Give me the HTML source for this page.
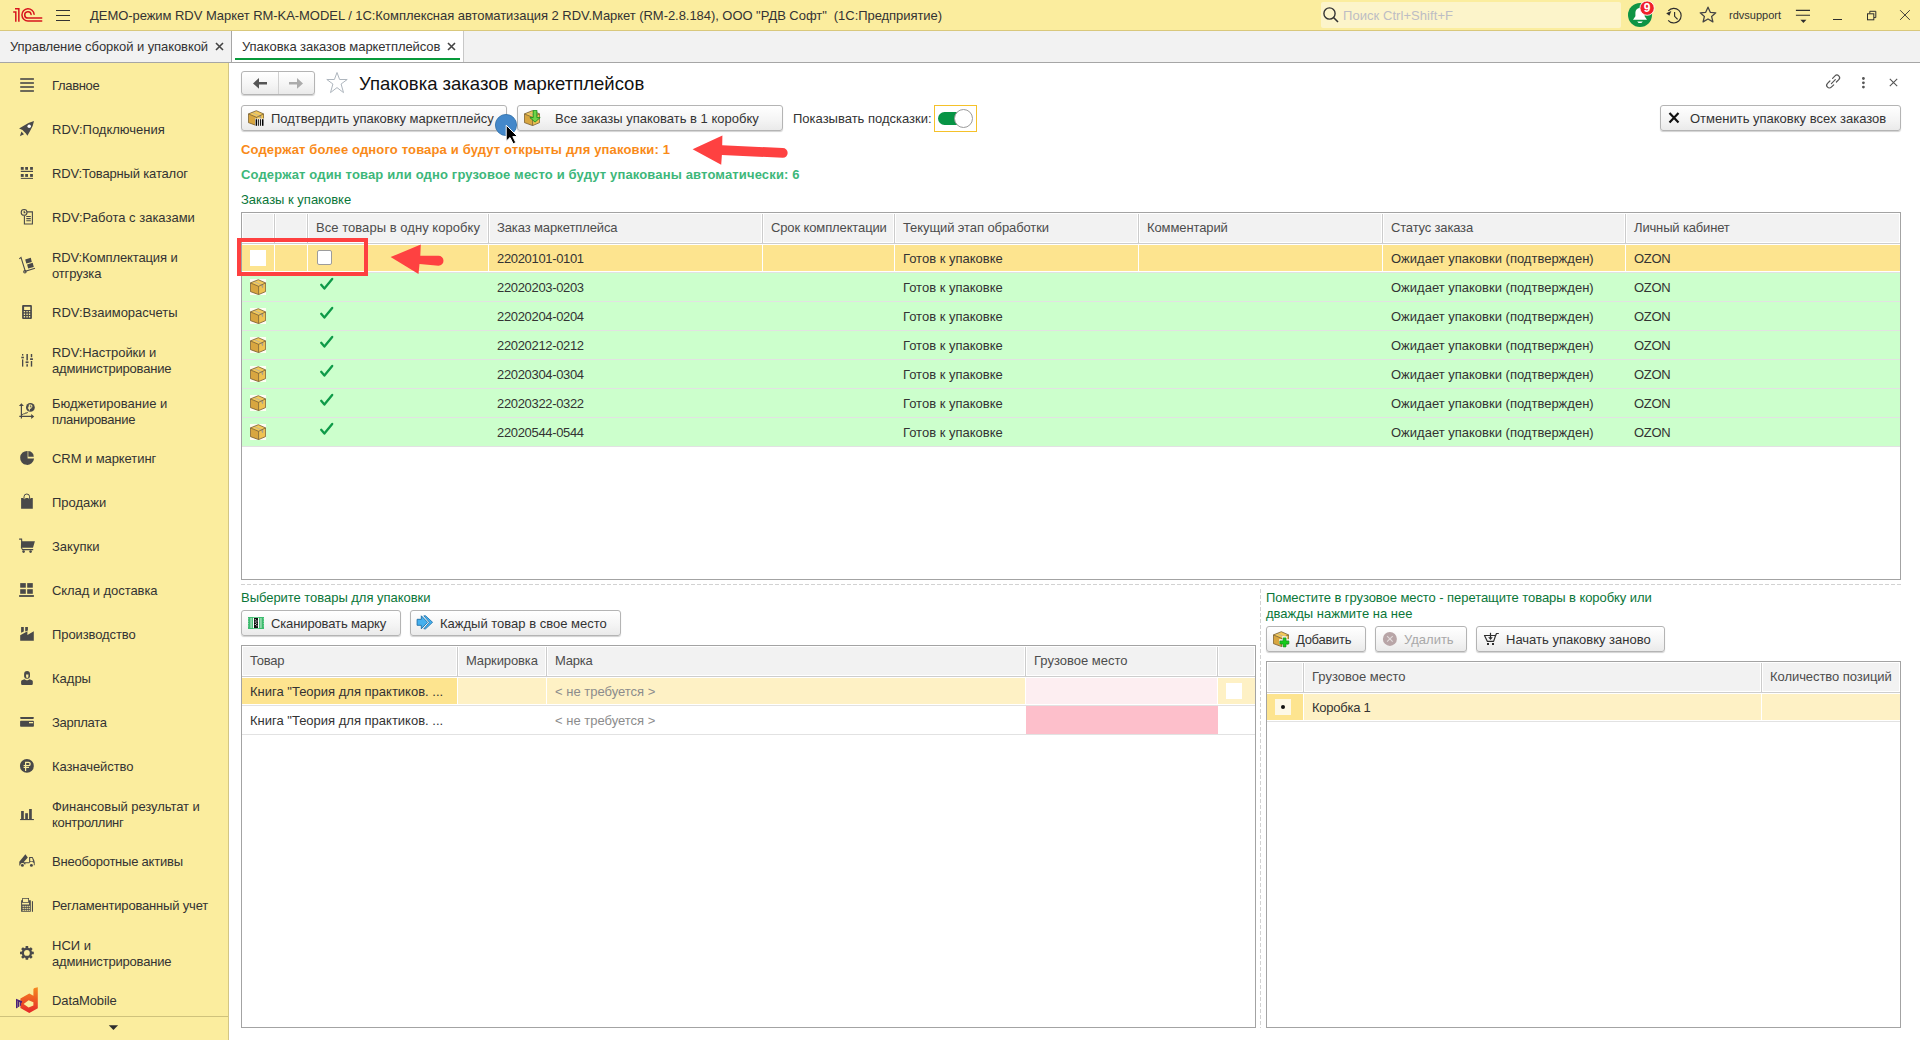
<!DOCTYPE html>
<html><head><meta charset="utf-8">
<style>
*{box-sizing:border-box}
html,body{margin:0;padding:0;width:1920px;height:1040px;overflow:hidden;background:#fff;font-family:"Liberation Sans",sans-serif;font-size:13px;color:#333}
.a{position:absolute}
.t{position:absolute;white-space:nowrap;line-height:16px}
#top{left:0;top:0;width:1920px;height:31px;background:#FBED9E;border-bottom:1px solid #D9C87C}
#tabs{left:0;top:31px;width:1920px;height:32px;background:#F2F2F2;border-bottom:1px solid #A6A6A6}
#side{left:0;top:63px;width:229px;height:977px;background:#FBED9E;border-right:1px solid #D3C684}
.si{position:absolute;left:52px;white-space:nowrap;line-height:16px;color:#333}
.ic{position:absolute;left:20px}
.btn{position:absolute;height:26px;border:1px solid #B4B4B4;border-radius:3px;background:linear-gradient(#FFFFFF,#F4F4F4 60%,#EAEAEA);box-shadow:0 1px 1px rgba(0,0,0,0.18)}
.tbl{position:absolute;border:1px solid #A5A5A5;background:#fff;overflow:hidden}
.hd{position:absolute;background:#F2F2F2}
.vl{position:absolute;width:1px}
.hl{position:absolute;height:1px}
.cell{position:absolute;white-space:nowrap;line-height:16px;color:#333}
.hdr{position:absolute;white-space:nowrap;line-height:16px;color:#4D4D4D}
</style></head><body>
<!-- TOP BAR -->
<div id="top" class="a"></div>
<div id="tabs" class="a"></div>
<div id="side" class="a"></div>

<!-- top bar content -->
<svg class="a" style="left:0;top:0" width="50" height="30" viewBox="0 0 50 30">
<g fill="none" stroke="#D7141E" stroke-width="1.5" stroke-linecap="butt">
<path d="M13.2 11.9H15.8V21.8"/><path d="M15 8.75H18.85V21.8"/>
<path d="M34.1 14.3A6.1 6.1 0 1 0 28 20.95H41.7" stroke-linecap="round"/>
<path d="M31.1 14.5A3.2 3.2 0 1 0 28 18.1H41.7" stroke-linecap="round"/>
</g></svg>
<div class="a" style="left:56px;top:10px;width:14px;height:1px;background:#333"></div>
<div class="a" style="left:56px;top:15px;width:14px;height:1px;background:#333"></div>
<div class="a" style="left:56px;top:20px;width:14px;height:1px;background:#333"></div>
<div class="t" style="left:90px;top:8px;color:#333;letter-spacing:-0.05px">ДЕМО-режим RDV Маркет RM-KA-MODEL / 1С:Комплексная автоматизация 2 RDV.Маркет (RM-2.8.184), ООО "РДВ Софт"&nbsp; (1С:Предприятие)</div>
<div class="a" style="left:1321px;top:2px;width:300px;height:26px;background:#FCF4CA;border-radius:2px"></div>
<svg class="a" style="left:1322px;top:6px" width="18" height="18" viewBox="0 0 18 18"><circle cx="7.5" cy="7.5" r="5.6" fill="none" stroke="#333" stroke-width="1.4"/><path d="M11.5 11.5L16 16" stroke="#333" stroke-width="1.6"/></svg>
<div class="t" style="left:1343px;top:8px;color:#BDBDC4;letter-spacing:0.059px">Поиск Ctrl+Shift+F</div>
<svg class="a" style="left:1620px;top:0" width="40" height="30" viewBox="1620 0 40 30">
<circle cx="1640" cy="14.9" r="12" fill="#0E9445"/>
<path d="M1633 19.8H1647L1644.6 16.2V12.5A4.6 4.6 0 0 0 1635.4 12.5V16.2z" fill="#fff"/>
<path d="M1637.2 21.4H1642.8L1641.4 23H1638.6z" fill="#fff"/>
<circle cx="1647.1" cy="8.1" r="7.2" fill="#F0202A" stroke="#fff" stroke-width="0.9"/>
<text x="1647.1" y="12.2" font-family="Liberation Sans" font-weight="bold" font-size="12" fill="#fff" text-anchor="middle">9</text>
</svg>
<svg class="a" style="left:1662px;top:5px" width="24" height="22" viewBox="1662 4.3 24 22"><g fill="none" stroke="#2E2E2E" stroke-width="1.15"><path d="M1668.3 10.2A7.3 7.3 0 1 1 1668.2 19.6"/><path d="M1674.6 11.4V15.6L1677.6 18.6"/></g><path d="M1666.2 12.6L1671.3 10.4 1669.4 15z" fill="#2E2E2E"/></svg>
<svg class="a" style="left:1698px;top:5px" width="20" height="20" viewBox="0 0 20 20"><path d="M10 2.2L12.3 7.3 17.8 7.8 13.6 11.4 14.9 16.9 10 14 5.1 16.9 6.4 11.4 2.2 7.8 7.7 7.3z" fill="none" stroke="#444" stroke-width="1.3" stroke-linejoin="round"/></svg>
<div class="t" style="left:1729px;top:7px;color:#333;font-size:11px">rdvsupport</div>
<svg class="a" style="left:1790px;top:5px" width="24" height="22" viewBox="1790 5 24 22"><path d="M1795.9 10.4H1810M1795.9 15.3H1810" stroke="#2E2E2E" stroke-width="1.1"/><path d="M1800.4 19.8H1806.4L1803.4 23z" fill="#2E2E2E"/></svg>
<div class="a" style="left:1833px;top:19px;width:9px;height:1px;background:#2E2E2E"></div>
<svg class="a" style="left:1864px;top:8px" width="16" height="16" viewBox="1864 8 16 16"><path d="M1869.8 13.5V11.3H1875.8V17.6H1874" fill="none" stroke="#2E2E2E" stroke-width="1"/><rect x="1867.5" y="13.8" width="6.3" height="6" fill="none" stroke="#2E2E2E" stroke-width="1"/></svg>
<svg class="a" style="left:1898px;top:8px" width="14" height="14" viewBox="1898 8 14 14"><path d="M1900.1 10.2L1909.8 19.9M1909.8 10.2L1900.1 19.9" stroke="#2E2E2E" stroke-width="0.9"/></svg>
<!-- tabs -->
<div class="t" style="left:10px;top:39px;color:#333;letter-spacing:-0.07px">Управление сборкой и упаковкой</div>
<svg class="a" style="left:215px;top:42px" width="9" height="9" viewBox="0 0 9 9"><path d="M1 1L8 8M8 1L1 8" stroke="#444" stroke-width="1.6"/></svg>
<div class="a" style="left:231px;top:31px;width:233px;height:31px;background:#fff;border-left:1px solid #A6A6A6;border-right:1px solid #C8C8C8"></div>
<div class="t" style="left:242px;top:39px;color:#333;letter-spacing:-0.07px">Упаковка заказов маркетплейсов</div>
<svg class="a" style="left:447px;top:42px" width="9" height="9" viewBox="0 0 9 9"><path d="M1 1L8 8M8 1L1 8" stroke="#444" stroke-width="1.6"/></svg>
<div class="a" style="left:235px;top:58px;width:225px;height:2px;background:#079A3B"></div>
<!-- sidebar -->
<div class="si" style="top:78px;letter-spacing:-0.333px">Главное</div>
<div class="si" style="top:122px">RDV:Подключения</div>
<div class="si" style="top:166px;letter-spacing:-0.158px">RDV:Товарный каталог</div>
<div class="si" style="top:210px">RDV:Работа с заказами</div>
<div class="si" style="top:250px;letter-spacing:-0.118px">RDV:Комплектация и</div>
<div class="si" style="top:266px;letter-spacing:-0.143px">отгрузка</div>
<div class="si" style="top:305px">RDV:Взаиморасчеты</div>
<div class="si" style="top:345px;letter-spacing:-0.071px">RDV:Настройки и</div>
<div class="si" style="top:361px;letter-spacing:-0.188px">администрирование</div>
<div class="si" style="top:396px">Бюджетирование и</div>
<div class="si" style="top:412px;letter-spacing:-0.273px">планирование</div>
<div class="si" style="top:451px;letter-spacing:-0.071px">CRM и маркетинг</div>
<div class="si" style="top:495px">Продажи</div>
<div class="si" style="top:539px">Закупки</div>
<div class="si" style="top:583px;letter-spacing:-0.067px">Склад и доставка</div>
<div class="si" style="top:627px;letter-spacing:-0.091px">Производство</div>
<div class="si" style="top:671px">Кадры</div>
<div class="si" style="top:715px;letter-spacing:-0.286px">Зарплата</div>
<div class="si" style="top:759px;letter-spacing:-0.091px">Казначейство</div>
<div class="si" style="top:799px;letter-spacing:-0.048px">Финансовый результат и</div>
<div class="si" style="top:815px;letter-spacing:-0.300px">контроллинг</div>
<div class="si" style="top:854px;letter-spacing:-0.222px">Внеоборотные активы</div>
<div class="si" style="top:898px;letter-spacing:-0.182px">Регламентированный учет</div>
<div class="si" style="top:938px">НСИ и</div>
<div class="si" style="top:954px;letter-spacing:-0.188px">администрирование</div>
<div class="si" style="top:993px;letter-spacing:-0.111px">DataMobile</div>
<svg class="a" style="left:0;top:0" width="228" height="1040" viewBox="0 0 228 1040">
<g fill="#494949" stroke="none">
<!-- glavnoe -->
<rect x="20.2" y="78.2" width="13.7" height="1.6"/><rect x="20.2" y="82.2" width="13.7" height="1.6"/><rect x="20.2" y="86.2" width="13.7" height="1.6"/><rect x="20.2" y="90.2" width="13.7" height="1.6"/>
<!-- rocket -->
<path d="M34 121.1Q33.2 126.6 29.8 131.6L27.4 135.7 25.9 133.5 22.5 130.1 19.1 128.5 23.3 126Q28.3 122.6 34 121.1Z"/>
<path d="M21.4 131.6L24 134.3 19.9 136.3z"/>
<circle cx="29.2" cy="126.2" r="1.75" fill="#fff"/>
<!-- catalog -->
<rect x="20.8" y="167" width="2.9" height="2.8"/><rect x="25.2" y="167" width="2.8" height="2.8"/><rect x="30.1" y="167" width="2.8" height="2.8"/>
<rect x="20.8" y="170.8" width="12.2" height="1.2"/>
<rect x="20.8" y="174" width="2.9" height="2.9"/><rect x="25.2" y="174" width="2.8" height="2.9"/><rect x="30.1" y="174" width="2.8" height="2.9"/>
<rect x="20.8" y="177.9" width="12.2" height="1"/>
<!-- rabota s zakazami -->
<g fill="none" stroke="#494949" stroke-width="1.1"><circle cx="24.1" cy="212.4" r="2.9"/><path d="M24.2 210.8V212.6H25.4"/><path d="M27 211.9H32.4V224H24.4V215.7"/><path d="M26.3 216.5H30.8M26.3 218.6H30.8M26.3 220.7H30.8"/></g>
<!-- komplektaciya (hand truck) -->
<g fill="none" stroke="#494949" stroke-width="1.1"><path d="M19.3 258.8L21 257.4 25.3 271.2 35 268.2"/><circle cx="24.9" cy="271.8" r="1.2"/></g>
<path d="M25.2 259.5L30.8 257.8 31.8 261.9 26.3 263.5zM27.1 264.5L32.7 262.8 33.8 266.9 28.2 268.6z"/>
<!-- calculator -->
<path fill-rule="evenodd" d="M23.1 305H30.9A1 1 0 0 1 31.9 306V317.9A1 1 0 0 1 30.9 318.9H23.1A1 1 0 0 1 22.1 317.9V306A1 1 0 0 1 23.1 305ZM24.1 306.7V310H30.3V306.7ZM23.8 310.9V312.3H25.1V310.9ZM26.4 310.9V312.3H27.7V310.9ZM28.9 310.9V312.3H30.2V310.9ZM23.8 313.5V314.9H25.1V313.5ZM26.4 313.5V314.9H27.7V313.5ZM28.9 313.5V314.9H30.2V313.5ZM23.8 316.1V317.5H25.1V316.1ZM26.4 316.1V317.5H27.7V316.1ZM28.9 316.1V317.5H30.2V316.1Z"/>
<!-- sliders -->
<rect x="22" y="354" width="1.3" height="1.6"/><rect x="21.3" y="356.7" width="2.6" height="1.6"/><rect x="22" y="359.4" width="1.3" height="7.2"/>
<rect x="26.4" y="354" width="1.5" height="6.4"/><rect x="25.6" y="361.4" width="2.9" height="1.7"/><rect x="26.4" y="364.2" width="1.5" height="2.4"/>
<rect x="30.8" y="354" width="1.4" height="3.2"/><rect x="30.1" y="358.3" width="2.8" height="1.7"/><rect x="30.8" y="361" width="1.4" height="5.6"/>
<!-- budget -->
<path d="M21.4 403.2L23.9 406H22V415.8H31.2V413.9L34.2 416.4 31.2 418.9V417H22V418.6H20.8V417H19.3V415.8H20.8V406H18.9Z"/>
<path d="M22 414.2L23.3 413.4H24.3L25.5 412.6H26.5L27.8 411.8V412.7L26.8 413.4H25.8L24.6 414.2H23.6L22 415.2Z"/>
<circle cx="30.4" cy="407.4" r="4.4"/>
<path fill="#FBED9E" fill-rule="evenodd" d="M28.8 404.6H30.9A1.55 1.55 0 0 1 30.9 407.7H29.9V408.3H31.2V409.1H29.9V410.4H28.8V409.1H27.9V408.3H28.8V407.7H27.9V406.8H28.8ZM29.9 405.5V406.8H30.8A0.65 0.65 0 0 0 30.8 405.5Z"/>
<!-- crm pie -->
<path d="M27.6 450.9V458.6H34.1A7 7 0 1 1 27.6 450.9Z"/>
<path d="M28.3 451.1A6.1 6.1 0 0 1 33.8 456.7H28.3Z"/>
<!-- sales bag -->
<path d="M21.1 498.1H23.3A1.1 1.1 0 0 0 25.5 498.1H28.4A1.1 1.1 0 0 0 30.6 498.1H32.8V508.7H21.1Z"/>
<path d="M24 499.2V496.8A2.8 2.8 0 0 1 29.6 496.8V499.2" fill="none" stroke="#494949" stroke-width="1"/>
<!-- cart -->
<path d="M19.1 538.6H22.1L22.3 541.2H34.9L33 547.8H21.9L22.8 549.1H33.2V550.2H22.2L20.9 547.8 21.1 539.8H19.1Z"/>
<circle cx="23.6" cy="551.6" r="1.3"/><circle cx="30.6" cy="551.6" r="1.3"/>
<!-- sklad -->
<rect x="20.2" y="583.1" width="5.6" height="4.6"/><rect x="27.2" y="583.1" width="5.6" height="4.6"/><rect x="20.2" y="589.2" width="5.6" height="4.6"/><rect x="27.2" y="589.2" width="5.6" height="4.6"/><rect x="19.1" y="595.1" width="14.8" height="1.8"/>
<!-- factory -->
<path d="M21.1 627H23.8V631.6L21.1 632.8ZM25.2 627H27.9V630.4L25.2 631.6Z"/>
<path d="M20.2 640.7V635.3L27.4 631.2V635L33.8 631.2V640.7Z"/>
<!-- kadry -->
<path fill-rule="evenodd" d="M27.1 671A3 3 0 0 1 30 674V676.5A2.5 2.5 0 0 1 27.5 678.7H26.6A2.5 2.5 0 0 1 24.1 676.5V674A3 3 0 0 1 27.1 671ZM26 674.4L28.5 674.4 28.3 677.2A1.1 1.1 0 0 1 26.2 677.2Z"/>
<path d="M24.4 679.2L26.2 680.2H27.8L29.6 679.2 32 680.3A1.5 1.5 0 0 1 32.8 681.6V683.8A1.2 1.2 0 0 1 31.6 685H22.3A1.2 1.2 0 0 1 21.1 683.8V681.6A1.5 1.5 0 0 1 21.9 680.3Z"/>
<!-- zarplata -->
<rect x="20.1" y="717" width="13.8" height="1.9" rx="0.8"/>
<path fill-rule="evenodd" d="M20.9 720.7H33.1A0.8 0.8 0 0 1 33.9 721.5V726A0.8 0.8 0 0 1 33.1 726.8H20.9A0.8 0.8 0 0 1 20.1 726V721.5A0.8 0.8 0 0 1 20.9 720.7ZM29 722V723.2H33.1V722Z"/>
<!-- kaznacheystvo -->
<circle cx="26.9" cy="765.9" r="6.95"/>
<path d="M25 761.8H28.6A2.2 2.2 0 0 1 28.6 766.2H26.2V766.9H29V768H26.2V771H25V768H23.6V766.9H25V766.2H23.6V765H25ZM26.2 763V765H28.5A1 1 0 0 0 28.5 763Z" fill="#FBED9E"/>
<!-- finansoviy -->
<rect x="21.1" y="811" width="2.7" height="8.4"/><rect x="25.2" y="813.2" width="2.7" height="6.2"/><rect x="29.1" y="809" width="2.7" height="10.4"/><rect x="20.1" y="819" width="13.8" height="1.1"/>
<!-- truck -->
<path d="M19.3 861.8L25.4 854.2 27.8 857.4 23.6 862.2H29.1V857H32.6L34.2 860.2 34.7 862.3V865.3H33.6A2.3 2.3 0 0 0 29.2 863.3H25.4V864.5H24.6A2.3 2.3 0 0 0 20.3 864.5V865.6H19.3Z"/>
<path d="M30.2 858V861.2H33.2L32.1 858Z" fill="#FBED9E"/>
<circle cx="22.4" cy="865.4" r="1.45"/><circle cx="31.4" cy="865.4" r="1.45"/>
<!-- register -->
<path fill-rule="evenodd" d="M22.2 898H29V900.3H30.8V911.8H21.1V900.3H22.2ZM23 898.8V901.9H28.2V898.8ZM22.1 902.7V904.4H29.1V902.7ZM22.6 905.8V907H23.8V905.8ZM24.6 905.8V907H25.8V905.8ZM26.6 905.8V907H27.8V905.8ZM28.6 905.8V907H29.8V905.8ZM22.6 907.8V909H23.8V907.8ZM24.6 907.8V909H25.8V907.8ZM26.6 907.8V909H27.8V907.8ZM28.6 907.8V909H29.8V907.8ZM22.6 909.8V911H23.8V909.8ZM24.6 909.8V911H25.8V909.8ZM26.6 909.8V911H27.8V909.8ZM28.6 909.8V911H29.8V909.8Z"/>
<rect x="31.9" y="901.2" width="1.1" height="10.6"/>
<!-- gear -->
<path fill-rule="evenodd" d="M25.47 947.90L25.65 946.01L28.15 946.01L28.33 947.90L29.42 948.35L30.89 947.15L32.65 948.91L31.45 950.38L31.90 951.47L33.79 951.65L33.79 954.15L31.90 954.33L31.45 955.42L32.65 956.89L30.89 958.65L29.42 957.45L28.33 957.90L28.15 959.79L25.65 959.79L25.47 957.90L24.38 957.45L22.91 958.65L21.15 956.89L22.35 955.42L21.90 954.33L20.01 954.15L20.01 951.65L21.90 951.47L22.35 950.38L21.15 948.91L22.91 947.15L24.38 948.35ZM26.90 950.00A2.9 2.9 0 1 0 26.90 955.80A2.9 2.9 0 1 0 26.90 950.00Z"/>
</g>
<!-- datamobile -->
<defs><linearGradient id="dmg" x1="0" y1="0" x2="0" y2="1"><stop offset="0" stop-color="#F58A1F"/><stop offset="1" stop-color="#E5262A"/></linearGradient></defs>
<path fill-rule="evenodd" fill="url(#dmg)" d="M33.4 989.2Q33.6 988.2 34.6 987.9L37.8 987.2V1008.3L29.3 1013.1 20.4 1008.1 20.4 998.6 29.3 993.5 33.4 995.8ZM28.6 1000.2L23.6 1003.9 28.6 1007.6 33.4 1005.4V1002.3Z"/>
<path fill="#4A2177" d="M16 998.8L22.2 1001.2 21.6 1003.3 21.1 1002.6V1005.6L20.1 1006V1002.2L19.4 1001.9V1006.6L17.9 1007.3V1000.8L17.6 1000.7V1008L16 1008.3Z"/>
</svg>
<div class="a" style="left:0;top:1016px;width:228px;height:1px;background:#CFC27C"></div>
<svg class="a" style="left:106px;top:1022px" width="14" height="10" viewBox="106 1022 14 10"><path d="M108.8 1025.2H118.1L113.45 1030.1z" fill="#2E2E2E"/></svg>
<!-- form header -->
<div class="btn" style="left:241px;top:71px;width:74px;height:24px"></div>
<div class="a" style="left:278px;top:72px;width:1px;height:22px;background:#D0D0D0"></div>
<svg class="a" style="left:250px;top:75px" width="60" height="16" viewBox="0 0 60 16"><path d="M3 8.4L9 3V6.9H17V9.5H9V13.8z" fill="#555"/><path d="M53 8.4L47 3V6.9H39V9.5H47V13.8z" fill="#ABABAB"/></svg>
<svg class="a" style="left:324px;top:71px" width="26" height="24" viewBox="0 0 26 24"><path d="M13 1.5L15.6 8.5H23.2L17.1 13 19.5 21.6 13 16.6 6.5 21.6 8.9 13 2.8 8.5H10.4z" fill="none" stroke="#AEB6BE" stroke-width="1" stroke-linejoin="miter"/></svg>
<div class="t" style="left:359px;top:72px;font-size:18.5px;line-height:24px;color:#111">Упаковка заказов маркетплейсов</div>
<svg class="a" style="left:1824px;top:72px" width="20" height="20" viewBox="0 0 20 20"><g fill="none" stroke="#555" stroke-width="1.2" stroke-linecap="round"><path d="M8.6 6.3L11 3.9A2.6 2.6 0 0 1 14.8 7.6L12.4 10"/><path d="M9.7 12.8L7.3 15.2A2.6 2.6 0 0 1 3.5 11.4L5.9 9"/><path d="M7.4 11.6L11.3 7.7"/></g></svg>
<svg class="a" style="left:1860px;top:76px" width="8" height="14" viewBox="0 0 8 14"><circle cx="3.4" cy="2.5" r="1.4" fill="#555"/><circle cx="3.4" cy="6.8" r="1.4" fill="#555"/><circle cx="3.4" cy="11.1" r="1.4" fill="#555"/></svg>
<svg class="a" style="left:1888px;top:77px" width="11" height="11" viewBox="0 0 11 11"><path d="M1.8 1.8L9.2 9.2M9.2 1.8L1.8 9.2" stroke="#555" stroke-width="1.1"/></svg>
<div class="btn" style="left:241px;top:105px;width:266px;height:26px"></div>
<div class="t" style="left:271px;top:111px;color:#333">Подтвердить упаковку маркетплейсу</div>
<div class="btn" style="left:517px;top:105px;width:266px;height:26px"></div>
<div class="t" style="left:555px;top:111px;color:#333">Все заказы упаковать в 1 коробку</div>
<div class="t" style="left:793px;top:111px;color:#333">Показывать подсказки:</div>
<div class="a" style="left:934px;top:105px;width:43px;height:27px;border:1px solid #F5C12A"></div>
<div class="a" style="left:938px;top:112px;width:30px;height:13px;border-radius:7px;background:#079445"></div>
<div class="a" style="left:954px;top:109px;width:19px;height:19px;border-radius:50%;background:#fff;border:1px solid #9A9A9A"></div>
<div class="btn" style="left:1660px;top:105px;width:241px;height:26px"></div>
<svg class="a" style="left:1667px;top:111px" width="14" height="14" viewBox="0 0 14 14"><path d="M2.5 2L11.5 11.5M11.5 2L2.5 11.5" stroke="#111" stroke-width="2.2"/></svg>
<div class="t" style="left:1690px;top:111px;color:#333">Отменить упаковку всех заказов</div>
<div class="t" style="left:241px;top:142px;color:#F98A18;font-weight:bold;letter-spacing:0.15px">Содержат более одного товара и будут открыты для упаковки: 1</div>
<div class="t" style="left:241px;top:167px;color:#3DB77A;font-weight:bold;letter-spacing:0.15px">Содержат один товар или одно грузовое место и будут упакованы автоматически: 6</div>
<div class="t" style="left:241px;top:192px;color:#0A7638">Заказы к упаковке</div>
<!-- main table -->
<div class="a" style="left:241px;top:212px;width:1660px;height:368px;border:1px solid #A3A3A3;background:#fff"></div>
<div class="a" style="left:243px;top:214px;width:1656px;height:28px;background:#F2F2F2"></div>
<div class="a" style="left:242px;top:243px;width:1658px;height:1px;background:#CDCDCD"></div>
<div class="a" style="left:273px;top:214px;width:3px;height:29px;background:#fff"></div><div class="a" style="left:274px;top:214px;width:1px;height:29px;background:#CCCCCC"></div>
<div class="a" style="left:306px;top:214px;width:3px;height:29px;background:#fff"></div><div class="a" style="left:307px;top:214px;width:1px;height:29px;background:#CCCCCC"></div>
<div class="a" style="left:487px;top:214px;width:3px;height:29px;background:#fff"></div><div class="a" style="left:488px;top:214px;width:1px;height:29px;background:#CCCCCC"></div>
<div class="a" style="left:761px;top:214px;width:3px;height:29px;background:#fff"></div><div class="a" style="left:762px;top:214px;width:1px;height:29px;background:#CCCCCC"></div>
<div class="a" style="left:893px;top:214px;width:3px;height:29px;background:#fff"></div><div class="a" style="left:894px;top:214px;width:1px;height:29px;background:#CCCCCC"></div>
<div class="a" style="left:1137px;top:214px;width:3px;height:29px;background:#fff"></div><div class="a" style="left:1138px;top:214px;width:1px;height:29px;background:#CCCCCC"></div>
<div class="a" style="left:1381px;top:214px;width:3px;height:29px;background:#fff"></div><div class="a" style="left:1382px;top:214px;width:1px;height:29px;background:#CCCCCC"></div>
<div class="a" style="left:1624px;top:214px;width:3px;height:29px;background:#fff"></div><div class="a" style="left:1625px;top:214px;width:1px;height:29px;background:#CCCCCC"></div>
<div class="t" style="left:316px;top:220px;color:#4D4D4D;letter-spacing:0.042px">Все товары в одну коробку</div>
<div class="t" style="left:497px;top:220px;color:#4D4D4D;letter-spacing:-0.118px">Заказ маркетплейса</div>
<div class="t" style="left:771px;top:220px;color:#4D4D4D;letter-spacing:-0.125px">Срок комплектации</div>
<div class="t" style="left:903px;top:220px;color:#4D4D4D;letter-spacing:-0.095px">Текущий этап обработки</div>
<div class="t" style="left:1147px;top:220px;color:#4D4D4D;letter-spacing:-0.100px">Комментарий</div>
<div class="t" style="left:1391px;top:220px;color:#4D4D4D;letter-spacing:-0.167px">Статус заказа</div>
<div class="t" style="left:1634px;top:220px;color:#4D4D4D;letter-spacing:-0.154px">Личный кабинет</div>
<div class="a" style="left:242px;top:244px;width:1658px;height:28px;background:#fff"></div>
<div class="a" style="left:242px;top:245px;width:32px;height:26px;background:#FDE48F"></div>
<div class="a" style="left:275px;top:245px;width:32px;height:26px;background:#FDE48F"></div>
<div class="a" style="left:308px;top:245px;width:180px;height:26px;background:#FDE48F"></div>
<div class="a" style="left:489px;top:245px;width:273px;height:26px;background:#FDE48F"></div>
<div class="a" style="left:763px;top:245px;width:131px;height:26px;background:#FDE48F"></div>
<div class="a" style="left:895px;top:245px;width:243px;height:26px;background:#FDE48F"></div>
<div class="a" style="left:1139px;top:245px;width:243px;height:26px;background:#FDE48F"></div>
<div class="a" style="left:1383px;top:245px;width:242px;height:26px;background:#FDE48F"></div>
<div class="a" style="left:1626px;top:245px;width:274px;height:26px;background:#FDE48F"></div>
<div class="a" style="left:242px;top:272px;width:1658px;height:1px;background:#E2E2E2"></div>
<div class="a" style="left:242px;top:273px;width:1658px;height:28px;background:#CCFFCC"></div>
<div class="a" style="left:242px;top:301px;width:1658px;height:1px;background:#E2E2E2"></div>
<div class="a" style="left:242px;top:302px;width:1658px;height:28px;background:#CCFFCC"></div>
<div class="a" style="left:242px;top:330px;width:1658px;height:1px;background:#E2E2E2"></div>
<div class="a" style="left:242px;top:331px;width:1658px;height:28px;background:#CCFFCC"></div>
<div class="a" style="left:242px;top:359px;width:1658px;height:1px;background:#E2E2E2"></div>
<div class="a" style="left:242px;top:360px;width:1658px;height:28px;background:#CCFFCC"></div>
<div class="a" style="left:242px;top:388px;width:1658px;height:1px;background:#E2E2E2"></div>
<div class="a" style="left:242px;top:389px;width:1658px;height:28px;background:#CCFFCC"></div>
<div class="a" style="left:242px;top:417px;width:1658px;height:1px;background:#E2E2E2"></div>
<div class="a" style="left:242px;top:418px;width:1658px;height:28px;background:#CCFFCC"></div>
<div class="a" style="left:242px;top:446px;width:1658px;height:1px;background:#E2E2E2"></div>
<div class="t" style="left:497px;top:251px;letter-spacing:-0.333px">22020101-0101</div>
<div class="t" style="left:903px;top:251px">Готов к упаковке</div>
<div class="t" style="left:1391px;top:251px">Ожидает упаковки (подтвержден)</div>
<div class="t" style="left:1634px;top:251px;letter-spacing:-0.333px">OZON</div>
<div class="t" style="left:497px;top:280px;letter-spacing:-0.333px">22020203-0203</div>
<div class="t" style="left:903px;top:280px">Готов к упаковке</div>
<div class="t" style="left:1391px;top:280px">Ожидает упаковки (подтвержден)</div>
<div class="t" style="left:1634px;top:280px;letter-spacing:-0.333px">OZON</div>
<div class="t" style="left:497px;top:309px;letter-spacing:-0.333px">22020204-0204</div>
<div class="t" style="left:903px;top:309px">Готов к упаковке</div>
<div class="t" style="left:1391px;top:309px">Ожидает упаковки (подтвержден)</div>
<div class="t" style="left:1634px;top:309px;letter-spacing:-0.333px">OZON</div>
<div class="t" style="left:497px;top:338px;letter-spacing:-0.333px">22020212-0212</div>
<div class="t" style="left:903px;top:338px">Готов к упаковке</div>
<div class="t" style="left:1391px;top:338px">Ожидает упаковки (подтвержден)</div>
<div class="t" style="left:1634px;top:338px;letter-spacing:-0.333px">OZON</div>
<div class="t" style="left:497px;top:367px;letter-spacing:-0.333px">22020304-0304</div>
<div class="t" style="left:903px;top:367px">Готов к упаковке</div>
<div class="t" style="left:1391px;top:367px">Ожидает упаковки (подтвержден)</div>
<div class="t" style="left:1634px;top:367px;letter-spacing:-0.333px">OZON</div>
<div class="t" style="left:497px;top:396px;letter-spacing:-0.333px">22020322-0322</div>
<div class="t" style="left:903px;top:396px">Готов к упаковке</div>
<div class="t" style="left:1391px;top:396px">Ожидает упаковки (подтвержден)</div>
<div class="t" style="left:1634px;top:396px;letter-spacing:-0.333px">OZON</div>
<div class="t" style="left:497px;top:425px;letter-spacing:-0.333px">22020544-0544</div>
<div class="t" style="left:903px;top:425px">Готов к упаковке</div>
<div class="t" style="left:1391px;top:425px">Ожидает упаковки (подтвержден)</div>
<div class="t" style="left:1634px;top:425px;letter-spacing:-0.333px">OZON</div>
<!-- lower section -->
<div class="a" style="left:241px;top:584px;width:1660px;height:1px;background:repeating-linear-gradient(90deg,#D2D2D2 0 4px,transparent 4px 6px)"></div>
<div class="a" style="left:1260px;top:589px;width:1px;height:439px;background:repeating-linear-gradient(180deg,#D2D2D2 0 4px,transparent 4px 6px)"></div>
<div class="t" style="left:241px;top:590px;color:#0A7638;letter-spacing:-0.037px">Выберите товары для упаковки</div>
<div class="btn" style="left:241px;top:610px;width:160px;height:26px"></div>
<div class="t" style="left:271px;top:616px;letter-spacing:-0.125px">Сканировать марку</div>
<div class="btn" style="left:410px;top:610px;width:211px;height:26px"></div>
<div class="t" style="left:440px;top:616px">Каждый товар в свое место</div>
<div class="a" style="left:241px;top:645px;width:1015px;height:383px;border:1px solid #A3A3A3;background:#fff"></div>
<div class="a" style="left:243px;top:647px;width:1011px;height:28px;background:#F2F2F2"></div>
<div class="a" style="left:242px;top:676px;width:1013px;height:1px;background:#CDCDCD"></div>
<div class="a" style="left:456px;top:647px;width:3px;height:29px;background:#fff"></div><div class="a" style="left:457px;top:647px;width:1px;height:29px;background:#CCCCCC"></div>
<div class="a" style="left:545px;top:647px;width:3px;height:29px;background:#fff"></div><div class="a" style="left:546px;top:647px;width:1px;height:29px;background:#CCCCCC"></div>
<div class="a" style="left:1024px;top:647px;width:3px;height:29px;background:#fff"></div><div class="a" style="left:1025px;top:647px;width:1px;height:29px;background:#CCCCCC"></div>
<div class="a" style="left:1216px;top:647px;width:3px;height:29px;background:#fff"></div><div class="a" style="left:1217px;top:647px;width:1px;height:29px;background:#CCCCCC"></div>
<div class="t" style="left:250px;top:653px;color:#4D4D4D;letter-spacing:-0.250px">Товар</div>
<div class="t" style="left:466px;top:653px;color:#4D4D4D;letter-spacing:-0.111px">Маркировка</div>
<div class="t" style="left:555px;top:653px;color:#4D4D4D;letter-spacing:-0.250px">Марка</div>
<div class="t" style="left:1034px;top:653px;color:#4D4D4D">Грузовое место</div>
<div class="a" style="left:242px;top:678px;width:215px;height:26px;background:#FDE48F"></div>
<div class="a" style="left:458px;top:678px;width:88px;height:26px;background:#FEF1C5"></div>
<div class="a" style="left:547px;top:678px;width:478px;height:26px;background:#FEF1C5"></div>
<div class="a" style="left:1026px;top:678px;width:191px;height:26px;background:#FDEEF1"></div>
<div class="a" style="left:1218px;top:678px;width:37px;height:26px;background:#FEF1C5"></div>
<div class="a" style="left:1226px;top:683px;width:16px;height:16px;background:#fff"></div>
<div class="a" style="left:242px;top:705px;width:1013px;height:1px;background:#E2E2E2"></div>
<div class="a" style="left:1026px;top:706px;width:192px;height:28px;background:#FDBFCB"></div>
<div class="a" style="left:242px;top:734px;width:1013px;height:1px;background:#E2E2E2"></div>
<div class="t" style="left:250px;top:684px">Книга "Теория для практиков. ...</div>
<div class="t" style="left:555px;top:684px;color:#8C8C8C">&lt; не требуется &gt;</div>
<div class="t" style="left:250px;top:713px">Книга "Теория для практиков. ...</div>
<div class="t" style="left:555px;top:713px;color:#8C8C8C">&lt; не требуется &gt;</div>
<div class="t" style="left:1266px;top:590px;color:#0A7638;letter-spacing:-0.068px">Поместите в грузовое место - перетащите товары в коробку или</div>
<div class="t" style="left:1266px;top:606px;color:#0A7638">дважды нажмите на нее</div>
<div class="btn" style="left:1266px;top:626px;width:100px;height:26px"></div>
<div class="t" style="left:1296px;top:632px;letter-spacing:-0.286px">Добавить</div>
<div class="btn" style="left:1375px;top:626px;width:92px;height:26px"></div>
<div class="t" style="left:1404px;top:632px;color:#A8A8A8">Удалить</div>
<div class="btn" style="left:1476px;top:626px;width:189px;height:26px"></div>
<div class="t" style="left:1506px;top:632px">Начать упаковку заново</div>
<div class="a" style="left:1266px;top:661px;width:635px;height:367px;border:1px solid #A3A3A3;background:#fff"></div>
<div class="a" style="left:1268px;top:663px;width:631px;height:28px;background:#F2F2F2"></div>
<div class="a" style="left:1267px;top:692px;width:633px;height:1px;background:#CDCDCD"></div>
<div class="a" style="left:1302px;top:663px;width:3px;height:29px;background:#fff"></div><div class="a" style="left:1303px;top:663px;width:1px;height:29px;background:#CCCCCC"></div>
<div class="a" style="left:1760px;top:663px;width:3px;height:29px;background:#fff"></div><div class="a" style="left:1761px;top:663px;width:1px;height:29px;background:#CCCCCC"></div>
<div class="t" style="left:1312px;top:669px;color:#4D4D4D">Грузовое место</div>
<div class="t" style="left:1770px;top:669px;color:#4D4D4D;letter-spacing:-0.059px">Количество позиций</div>
<div class="a" style="left:1267px;top:694px;width:36px;height:26px;background:#FDE48F"></div>
<div class="a" style="left:1304px;top:694px;width:457px;height:26px;background:#FEF1C5"></div>
<div class="a" style="left:1762px;top:694px;width:138px;height:26px;background:#FEF1C5"></div>
<div class="a" style="left:1275px;top:699px;width:16px;height:16px;background:#FDF8E6"></div>
<div class="a" style="left:1281px;top:705px;width:4px;height:4px;border-radius:50%;background:#111"></div>
<div class="a" style="left:1267px;top:721px;width:633px;height:1px;background:#E2E2E2"></div>
<div class="t" style="left:1312px;top:700px;letter-spacing:-0.250px">Коробка 1</div>
<!-- icons & annotations -->
<svg width="0" height="0" style="position:absolute">
<defs>
<symbol id="box" viewBox="0 0 16 16">
<path d="M8.3 0.7L15.6 3.9 8.6 7.3 0.4 3.9z" fill="#F3C95A"/>
<path d="M0.4 3.9L8.6 7.3V15.6L0.4 12.6z" fill="#D8A640"/>
<path d="M8.6 7.3L15.6 3.9V12.6L8.6 15.6z" fill="#EFC352"/>
<path d="M4.6 2.3L12.3 5.8 11.4 6.3 3.7 2.8z" fill="#BDB49A"/>
<path d="M11.3 6.1L13.2 5.3V8.6L12.1 9.2z" fill="#A9A08A"/>
<path d="M8.3 0.7L15.6 3.9V12.6L8.6 15.6 0.4 12.6V3.9z M0.4 3.9L8.6 7.3 15.6 3.9M8.6 7.3V15.6" fill="none" stroke="#6E5426" stroke-width="0.75" stroke-linejoin="round"/>
</symbol>
</defs></svg>
<svg class="a" style="left:250px;top:279px" width="16" height="16"><rect width="16" height="16" fill="#FFFDF3"/><use href="#box"/></svg>
<svg class="a" style="left:318px;top:277px" width="16" height="14" viewBox="0 0 16 14"><path d="M3.2 7.8L6.4 11.6 14.2 2" fill="none" stroke="#0E9A48" stroke-width="2.3" stroke-linecap="round" stroke-linejoin="round"/></svg>
<svg class="a" style="left:250px;top:308px" width="16" height="16"><rect width="16" height="16" fill="#FFFDF3"/><use href="#box"/></svg>
<svg class="a" style="left:318px;top:306px" width="16" height="14" viewBox="0 0 16 14"><path d="M3.2 7.8L6.4 11.6 14.2 2" fill="none" stroke="#0E9A48" stroke-width="2.3" stroke-linecap="round" stroke-linejoin="round"/></svg>
<svg class="a" style="left:250px;top:337px" width="16" height="16"><rect width="16" height="16" fill="#FFFDF3"/><use href="#box"/></svg>
<svg class="a" style="left:318px;top:335px" width="16" height="14" viewBox="0 0 16 14"><path d="M3.2 7.8L6.4 11.6 14.2 2" fill="none" stroke="#0E9A48" stroke-width="2.3" stroke-linecap="round" stroke-linejoin="round"/></svg>
<svg class="a" style="left:250px;top:366px" width="16" height="16"><rect width="16" height="16" fill="#FFFDF3"/><use href="#box"/></svg>
<svg class="a" style="left:318px;top:364px" width="16" height="14" viewBox="0 0 16 14"><path d="M3.2 7.8L6.4 11.6 14.2 2" fill="none" stroke="#0E9A48" stroke-width="2.3" stroke-linecap="round" stroke-linejoin="round"/></svg>
<svg class="a" style="left:250px;top:395px" width="16" height="16"><rect width="16" height="16" fill="#FFFDF3"/><use href="#box"/></svg>
<svg class="a" style="left:318px;top:393px" width="16" height="14" viewBox="0 0 16 14"><path d="M3.2 7.8L6.4 11.6 14.2 2" fill="none" stroke="#0E9A48" stroke-width="2.3" stroke-linecap="round" stroke-linejoin="round"/></svg>
<svg class="a" style="left:250px;top:424px" width="16" height="16"><rect width="16" height="16" fill="#FFFDF3"/><use href="#box"/></svg>
<svg class="a" style="left:318px;top:422px" width="16" height="14" viewBox="0 0 16 14"><path d="M3.2 7.8L6.4 11.6 14.2 2" fill="none" stroke="#0E9A48" stroke-width="2.3" stroke-linecap="round" stroke-linejoin="round"/></svg>
<div class="a" style="left:250px;top:250px;width:16px;height:16px;background:#fff"></div>
<div class="a" style="left:317px;top:250px;width:15px;height:15px;background:#fff;border:1px solid #9C9C9C;border-radius:2px"></div>
<svg class="a" style="left:248px;top:110px" width="16" height="16"><use href="#box"/><rect x="7" y="8.6" width="9" height="7.4" fill="#fff"/><rect x="7.6" y="9.2" width="1.6" height="6.6" fill="#000"/><rect x="10.2" y="9.2" width="0.9" height="6.6" fill="#000"/><rect x="12.1" y="9.2" width="0.9" height="6.6" fill="#000"/><rect x="13.9" y="9.2" width="1.6" height="6.6" fill="#000"/></svg>
<svg class="a" style="left:524px;top:110px" width="17" height="16" viewBox="0 0 17 16"><use href="#box" width="16" height="16"/><path d="M9.2 0.3H12.9V7.6H16.2L11.05 12.1 5.9 7.6H9.2z" fill="#6FD448" stroke="#18901F" stroke-width="0.9" stroke-linejoin="round"/></svg>
<div class="a" style="left:237px;top:238px;width:131px;height:38px;border:4px solid #FE4040"></div>
<svg class="a" style="left:680px;top:125px" width="115" height="50" viewBox="680 125 115 50"><path d="M692.6 149.2L722.4 135.4 722.2 145.2 782.8 148.1A4.85 4.85 0 0 1 782.8 157.8L721.9 154.9 721.2 164.7z" fill="#FE4141"/></svg>
<svg class="a" style="left:385px;top:240px" width="60" height="40" viewBox="385 240 60 40"><path d="M390.6 257.1L420.8 244.6 420.3 255.8 438.5 255.8A5 5 0 0 1 438.5 265.8L419.5 264 418.5 274z" fill="#FE4141"/></svg>
<svg class="a" style="left:490px;top:108px" width="40" height="40" viewBox="490 108 40 40"><circle cx="506" cy="125" r="10.6" fill="#4488CA" stroke="#2F6DA6" stroke-width="0.8"/><path d="M506.2 125.2V141.2L510 137.6 513.2 143.8 515.8 142.6 512.8 136.6H517.6z" fill="#000" stroke="#fff" stroke-width="1" stroke-linejoin="miter"/></svg>
<!-- lower button icons -->
<svg class="a" style="left:248px;top:617px" width="16" height="12" viewBox="0 0 16 12">
<path d="M0 0H16V1.2L15.4 1.8 16 2.4V3.6L15.4 4.2 16 4.8V6L15.4 6.6 16 7.2V8.4L15.4 9 16 9.6V12H0V9.6L0.6 9 0 8.4V7.2L0.6 6.6 0 6V4.8L0.6 4.2 0 3.6V2.4L0.6 1.8 0 1.2z" fill="#3DBB6E"/>
<rect x="2.2" y="1" width="2" height="10" fill="#8FD9AA"/><rect x="11.8" y="1" width="2" height="10" fill="#8FD9AA"/>
<rect x="5" y="0.8" width="6" height="10.4" fill="#fff"/>
<rect x="6" y="1" width="4" height="10" fill="#111"/>
<path d="M6.8 2.2h1v1h-1zM8.4 3.4h1v1h-1zM6.8 4.6h1v1h-1zM8.2 5.8h1v1h-1zM6.8 7h1v1h-1zM8.4 8.2h1v1h-1z" fill="#fff"/>
</svg>
<svg class="a" style="left:416px;top:614px" width="18" height="16" viewBox="416 614 18 16">
<path d="M425.6 615.8L432.6 622.3 425.6 628.8 423.8 628.8 429.4 622.3 423.8 615.8z" fill="#45B0EE" stroke="#1C6FA8" stroke-width="0.8" stroke-linejoin="round"/>
<path d="M417.1 619.3H421.3V615.8L427.6 622.3 421.3 628.8V625.3H417.1z" fill="#45B0EE" stroke="#1C6FA8" stroke-width="0.9" stroke-linejoin="round"/>
</svg>
<svg class="a" style="left:1273px;top:631px" width="17" height="17" viewBox="0 0 17 17"><use href="#box" width="16" height="16"/>
<path d="M9.2 5.2H13.8V8.2H16.8V12.8H13.8V16.8H9.2V12.8H6.2V8.2H9.2z" fill="#fff"/>
<path d="M10.1 6.9H13V9.9H15.9V12.9H13V15.9H10.1V12.9H6.9V9.9H10.1z" fill="#12CC1A" stroke="#1A8F22" stroke-width="0.8"/>
</svg>
<svg class="a" style="left:1382px;top:631px" width="16" height="16" viewBox="1382 631 16 16">
<circle cx="1389.9" cy="638.9" r="7" fill="#B8A5A7"/>
<path d="M1387.1 636.1L1392.7 641.7M1392.7 636.1L1387.1 641.7" stroke="#E2DCDC" stroke-width="1.1"/>
</svg>
<svg class="a" style="left:1482px;top:631px" width="18" height="15" viewBox="1482 631 18 15">
<g fill="none" stroke="#2E2E2E" stroke-width="1.2" stroke-linejoin="round">
<path d="M1484.5 635.5H1495.6L1493.6 641.4H1487.4z"/>
<path d="M1495.6 635.5L1496.5 633.5H1498.8"/>
<path d="M1490.5 632.8V638.4"/>
</g>
<path d="M1488.2 637.2H1492.8L1490.5 640z" fill="#2E2E2E"/>
<rect x="1487" y="643" width="2" height="2" fill="#2E2E2E"/><rect x="1492" y="643" width="2" height="2" fill="#2E2E2E"/>
</svg>
</body></html>
